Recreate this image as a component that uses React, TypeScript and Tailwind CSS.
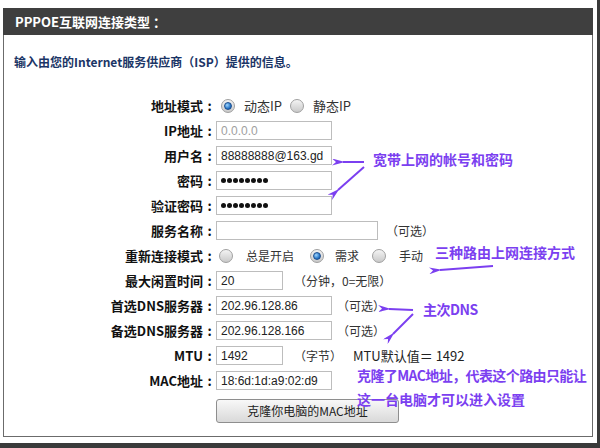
import React from "react";

interface Row {
  label: string;
  content: React.ReactNode;
}

function Radio({ checked }: { checked?: boolean }) {
  return (
    <span className="flex h-[14px] w-[14px] shrink-0 items-center justify-center rounded-full border border-[#a0a0a0] bg-gradient-to-b from-[#f4f4f4] to-[#c9c9c9]">
      {checked && (
        <span className="h-[8px] w-[8px] rounded-full border border-[#1d4f8f] bg-[radial-gradient(circle_at_35%_35%,#9fd6ff,#2a78c8_60%,#134b8c)]" />
      )}
    </span>
  );
}

function Field({
  value,
  width,
  muted,
  dots,
}: {
  value: string;
  width: string;
  muted?: boolean;
  dots?: boolean;
}) {
  return (
    <div
      className={`flex h-[19px] items-center border border-[#bdbdbd] bg-white pl-[4px] font-['Liberation_Sans',sans-serif] text-[12px] ${width} ${
        muted ? "text-[#a0a0a0]" : "text-[#222]"
      }`}
    >
      {dots ? (
        <span className="flex gap-[1px]">
          {[0, 1, 2, 3, 4, 5, 6, 7].map((i) => (
            <span key={i} className="h-[5px] w-[5px] rounded-full bg-[#111]" />
          ))}
        </span>
      ) : (
        value
      )}
    </div>
  );
}

const Note = ({ children }: { children: React.ReactNode }) => (
  <span className="text-[12px] text-[#333]">{children}</span>
);

const ROWS: Row[] = [
  {
    label: "地址模式",
    content: (
      <div className="flex items-center pl-[5px] text-[13px] text-[#333]">
        <Radio checked />
        <span className="ml-[9px]">动态IP</span>
        <span className="ml-[8px]">
          <Radio />
        </span>
        <span className="ml-[9px]">静态IP</span>
      </div>
    ),
  },
  { label: "IP地址", content: <Field value="0.0.0.0" width="w-[116px]" muted /> },
  { label: "用户名", content: <Field value="88888888@163.gd" width="w-[116px]" /> },
  { label: "密码", content: <Field value="" width="w-[116px]" dots /> },
  { label: "验证密码", content: <Field value="" width="w-[116px]" dots /> },
  {
    label: "服务名称",
    content: (
      <div className="flex items-center gap-[8px]">
        <Field value="" width="w-[162px]" />
        <Note>（可选）</Note>
      </div>
    ),
  },
  {
    label: "重新连接模式",
    content: (
      <div className="flex items-center pl-[3px] text-[12px] text-[#333]">
        <Radio />
        <span className="ml-[13px]">总是开启</span>
        <span className="ml-[16px]">
          <Radio checked />
        </span>
        <span className="ml-[11px]">需求</span>
        <span className="ml-[13px]">
          <Radio />
        </span>
        <span className="ml-[13px]">手动</span>
      </div>
    ),
  },
  {
    label: "最大闲置时间",
    content: (
      <div className="flex items-center gap-[11px]">
        <Field value="20" width="w-[67px]" />
        <Note>（分钟，0=无限）</Note>
      </div>
    ),
  },
  {
    label: "首选DNS服务器",
    content: (
      <div className="flex items-center gap-[5px]">
        <Field value="202.96.128.86" width="w-[116px]" />
        <Note>（可选）</Note>
      </div>
    ),
  },
  {
    label: "备选DNS服务器",
    content: (
      <div className="flex items-center gap-[5px]">
        <Field value="202.96.128.166" width="w-[116px]" />
        <Note>（可选）</Note>
      </div>
    ),
  },
  {
    label: "MTU",
    content: (
      <div className="flex items-center gap-[11px]">
        <Field value="1492" width="w-[67px]" />
        <Note>（字节）</Note>
        <span className="text-[13px] text-[#222]">MTU默认值＝ 1492</span>
      </div>
    ),
  },
  { label: "MAC地址", content: <Field value="18:6d:1d:a9:02:d9" width="w-[116px]" /> },
];

function Arrows() {
  const lines = [
    [364, 162, 343, 162],
    [364, 167, 338, 190],
    [493, 266, 440, 270],
    [413, 310, 389, 309],
    [413, 314, 393, 334],
  ];
  return (
    <svg className="pointer-events-none absolute left-0 top-0" width="600" height="448">
      <defs>
        <marker id="ah" viewBox="0 0 13 7" refX="2" refY="3.5" markerWidth="13" markerHeight="7" orient="auto-start-reverse" markerUnits="userSpaceOnUse">
          <path d="M13 0 L0 3.5 L13 7 L9 3.5 Z" fill="#7b3ff0" />
        </marker>
      </defs>
      {lines.map(([x1, y1, x2, y2], i) => (
        <line key={i} x1={x1} y1={y1} x2={x2} y2={y2} stroke="#7b3ff0" strokeWidth="2" markerEnd="url(#ah)" />
      ))}
    </svg>
  );
}

export default function App() {
  return (
    <div className="relative flex h-[448px] w-[600px] overflow-hidden bg-white font-['Noto_Sans_CJK_SC',sans-serif]">
      <div className="flex w-[597px] flex-col">
        <div className="flex-1 pl-[3px] pt-[8px]">
          <div className="w-[590px]">
            <div className="flex h-[27px] items-center bg-[#3f3f3f] pl-[12px] text-[13px] font-bold text-white">
              PPPOE互联网连接类型 ：
            </div>
            <div className="h-[402px] border-x border-b border-[#6b6b6b]">
              <div className="pl-[10px] pt-[17px] text-[12px] font-bold leading-[20px] text-[#1b3566]">
                输入由您的Internet服务供应商（ISP）提供的信息。
              </div>
              <div className="mt-[21px] grid grid-cols-[212px_1fr]">
                {ROWS.map((row) => (
                  <React.Fragment key={row.label}>
                    <div className="flex h-[25px] items-center justify-end text-[13px] font-bold text-[#111]">
                      {row.label}
                      <span className="w-[13px] text-center">:</span>
                    </div>
                    <div className="flex h-[25px] items-center">{row.content}</div>
                  </React.Fragment>
                ))}
                <div />
                <div className="pt-[4px]">
                  <button className="h-[24px] w-[183px] rounded-[3px] border border-[#8e8e8e] bg-gradient-to-b from-[#f8f8f8] to-[#d9d9d9] text-[12px] text-[#222]">
                    克隆你电脑的MAC地址
                  </button>
                </div>
              </div>
            </div>
          </div>
        </div>
        <div className="h-[5px] bg-[#3a3a3a]" />
      </div>
      <div className="w-[3px] bg-[#3a3a3a]" />

      <Arrows />
      <div className="absolute left-[373px] top-[149px] text-[14px] font-bold leading-[20px] text-[#7b3ff0]">
        宽带上网的帐号和密码
      </div>
      <div className="absolute left-[435px] top-[242px] text-[14px] font-bold leading-[20px] text-[#7b3ff0]">
        三种路由上网连接方式
      </div>
      <div className="absolute left-[423px] top-[299px] text-[14px] font-bold leading-[20px] tracking-[-0.5px] text-[#7b3ff0]">
        主次DNS
      </div>
      <div className="absolute left-[357px] top-[365px] text-[14px] font-bold leading-[20px] tracking-[-0.6px] text-[#7b3ff0]">
        克隆了MAC地址，代表这个路由只能让
      </div>
      <div className="absolute left-[357px] top-[389px] text-[14px] font-bold leading-[20px] text-[#7b3ff0]">
        这一台电脑才可以进入设置
      </div>
    </div>
  );
}
